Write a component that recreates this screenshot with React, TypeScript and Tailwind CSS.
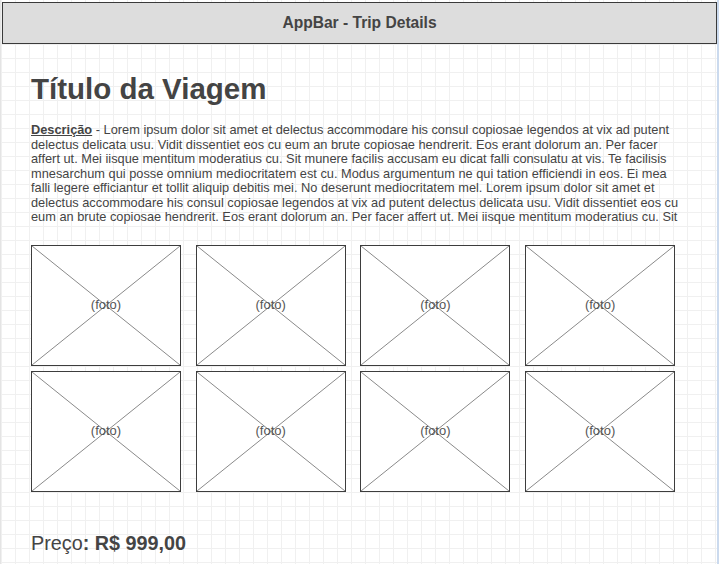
const photos = Array.from({ length: 8 }, (_, i) => i);

function PhotoPlaceholder() {
  return (
    <div className="relative w-[150px] h-[121px] bg-white border border-[#3d3d3d] flex items-center justify-center">
      <svg
        className="absolute inset-0 w-full h-full"
        viewBox="0 0 100 100"
        preserveAspectRatio="none"
      >
        <line x1="0" y1="0" x2="100" y2="100" stroke="#8a8a8a" strokeWidth="1" vectorEffect="non-scaling-stroke" />
        <line x1="100" y1="0" x2="0" y2="100" stroke="#8a8a8a" strokeWidth="1" vectorEffect="non-scaling-stroke" />
      </svg>
      <span className="relative text-[13px] text-[#555]">(foto)</span>
    </div>
  );
}

export default function App() {
  return (
    <div
      className="w-[719px] h-[564px] overflow-hidden flex bg-white bg-[linear-gradient(to_right,#f0f0f0_1px,transparent_1px),linear-gradient(to_bottom,#f0f0f0_1px,transparent_1px)] bg-[length:14px_14px] bg-[position:1px_2px] text-[#444]"
      style={{ fontFamily: '"Liberation Sans", Arial, sans-serif' }}
    >
      {/* left edge */}
      <div className="w-px shrink-0 bg-[#e4e4e4]" />

      <div className="flex-1 flex flex-col pt-[2px]">
        {/* AppBar */}
        <header className="ml-[1px] h-[42px] shrink-0 border border-[#3a3a3a] bg-[#dddddd] flex items-center justify-center">
          <span className="text-[15.6px] font-bold text-[#444]">AppBar - Trip Details</span>
        </header>

        <main className="pl-[30px] pt-[28px]">
          <h1 className="text-[29.5px] leading-[34px] font-bold">Título da Viagem</h1>

          <p className="mt-[17px] w-[658px] text-[12.8px] leading-[14.5px]">
            <span className="font-bold underline">Descrição</span> - Lorem ipsum dolor sit amet et delectus
            accommodare his consul copiosae legendos at vix ad putent delectus delicata usu. Vidit dissentiet
            eos cu eum an brute copiosae hendrerit. Eos erant dolorum an. Per facer affert ut. Mei iisque
            mentitum moderatius cu. Sit munere facilis accusam eu dicat falli consulatu at vis. Te facilisis
            mnesarchum qui posse omnium mediocritatem est cu. Modus argumentum ne qui tation efficiendi in eos.
            Ei mea falli legere efficiantur et tollit aliquip debitis mei. No deserunt mediocritatem mel. Lorem
            ipsum dolor sit amet et delectus accommodare his consul copiosae legendos at vix ad putent delectus
            delicata usu. Vidit dissentiet eos cu eum an brute copiosae hendrerit. Eos erant dolorum an. Per
            facer affert ut. Mei iisque mentitum moderatius cu. Sit
          </p>

          <div className="mt-[20px] grid grid-cols-[repeat(4,150px)] gap-x-[14.7px] gap-y-[5px]">
            {photos.map((i) => (
              <PhotoPlaceholder key={i} />
            ))}
          </div>

          <p className="mt-[39px] text-[19.8px] leading-[24px]">
            Preço<span className="font-bold">: R$ 999,00</span>
          </p>
        </main>
      </div>

      {/* right edge */}
      <div className="w-[2px] shrink-0 bg-[#cbdaee]" />
    </div>
  );
}
